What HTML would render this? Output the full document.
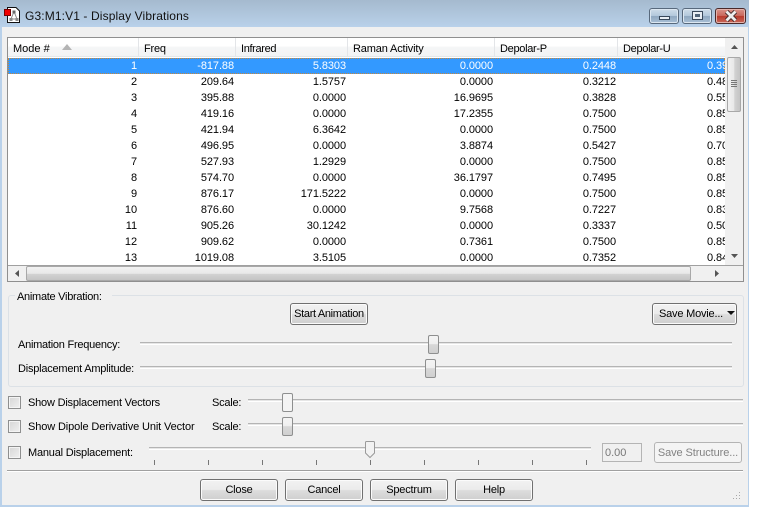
<!DOCTYPE html>
<html><head><meta charset="utf-8"><style>
html,body{margin:0;padding:0;background:#fff}
body{width:763px;height:507px;overflow:hidden;position:relative;font-family:"Liberation Sans",sans-serif;font-size:11px;color:#000}
div{position:absolute;box-sizing:border-box}
.t{white-space:nowrap;line-height:16px;height:16px;letter-spacing:-.22px}
.btn{border:1px solid #707070;border-radius:3px;background:linear-gradient(#f2f2f2 0,#ebebeb 48%,#dddddd 52%,#cfcfcf 100%);box-shadow:inset 0 0 0 1px #fbfbfb;text-align:center;line-height:21px;height:22px;letter-spacing:-.2px}
.tr{height:3px;background:#e6e6e6;border-top:1px solid #b4b4b4;border-bottom:1px solid #fff}
.th{width:11px;height:19px;border:1px solid #8e8f8f;border-radius:2px;background:linear-gradient(#f4f4f4 0,#f0f0f0 45%,#d8d8d8 50%,#d0d0d0 100%)}
.cb{width:13px;height:13px;border:1px solid #8e8f8f;background:linear-gradient(135deg,#d6d6d6,#f0f0f0);box-shadow:inset 0 0 0 1px #f4f4f4}
.hs{top:38px;height:19px;width:1px;background:#e3e5e8}
.row{left:8px;width:717px;height:16px}
.c{top:0;text-align:right;line-height:16px;height:16px;white-space:nowrap;letter-spacing:-.08px}
.c1{left:0;width:129px}.c2{left:0;width:226px}.c3{left:0;width:338px}.c4{left:0;width:485px}.c5{left:0;width:608px}
.c6{left:0;width:717px;overflow:hidden;text-align:left;padding-left:699px}
.tick{width:1px;height:5px;background:#777;top:460px}
</style></head><body>
<div style="left:0;top:0;width:749px;height:507px;background:#b9d1ea"></div>
<div style="left:0;top:0;width:749px;height:27px;background:linear-gradient(#a5bace,#b9d1ea)"></div>
<div style="left:2px;top:27px;width:746px;height:478px;background:#f0f0f0"></div>

<svg style="position:absolute;left:4px;top:7px" width="18" height="17" viewBox="0 0 18 17">
<path d="M3.500 .5H12L15.500 4V15.500H3.500Z" fill="#fff" stroke="#111"/>
<path d="M10 4.500L7 12M10 4.500L13 12M7 12H13" stroke="#888" fill="none"/>
<rect x="8.500" y="3.500" width="3" height="3" fill="#666"/><rect x="5.500" y="11" width="3" height="3" fill="#888"/><rect x="11.500" y="11" width="3" height="3" fill="#888"/>
<rect x=".5" y="2.500" width="6" height="6" fill="#f00000" stroke="#700"/>
</svg>
<div class="t" style="left:25px;top:8px;font-size:12px;color:#111;letter-spacing:.12px">G3:M1:V1 - Display Vibrations</div>

<div style="left:649px;top:8px;width:30px;height:16px;border:1px solid #58697c;border-radius:3px;background:linear-gradient(#cfdce9,#b3c8dc 48%,#8fa8c0 52%,#a9c0d6);box-shadow:inset 0 0 0 1px #dce7f1"><div style="left:9px;top:7px;width:11px;height:4px;border:1px solid #38485a;background:#e8eef4"></div></div>
<div style="left:682px;top:8px;width:30px;height:16px;border:1px solid #58697c;border-radius:3px;background:linear-gradient(#cfdce9,#b3c8dc 48%,#8fa8c0 52%,#a9c0d6);box-shadow:inset 0 0 0 1px #dce7f1"><div style="left:9px;top:2px;width:11px;height:9px;border:1px solid #38485a;background:#e8eef4"><div style="left:2px;top:2px;width:5px;height:3px;background:#51657a"></div></div></div>
<div style="left:715px;top:8px;width:31px;height:16px;border:1px solid #4a2a2a;border-radius:3px;background:linear-gradient(#d9938a,#c9685c 48%,#b83a2c 52%,#c9685a);box-shadow:inset 0 0 0 1px #e4b3ab">
<svg style="position:absolute;left:8px;top:1px" width="14" height="12" viewBox="0 0 14 12"><path d="M2.500 1.500L11.500 10.500M11.500 1.500L2.500 10.500" stroke="#3b2626" stroke-width="4.500"/><path d="M2.500 1.500L11.500 10.500M11.500 1.500L2.500 10.500" stroke="#eee" stroke-width="2.800"/></svg></div>

<!-- table -->
<div style="left:7px;top:37px;width:737px;height:245px;border:1px solid #8f8f8f;background:#fff"></div>
<div style="left:8px;top:38px;width:717px;height:19px;background:linear-gradient(#fff 0,#fff 45%,#f5f6f7 50%,#f2f3f4 100%);border-bottom:1px solid #e4e6e8"></div>
<div class="hs" style="left:138px"></div><div class="hs" style="left:235px"></div><div class="hs" style="left:347px"></div><div class="hs" style="left:494px"></div><div class="hs" style="left:617px"></div>
<div class="t" style="left:13px;top:41px;letter-spacing:0">Mode #</div>
<svg style="position:absolute;left:62px;top:44px" width="11" height="6"><path d="M0 6L5 0L10 6Z" fill="#b4b4b4"/></svg>
<div class="t" style="left:144px;top:41px">Freq</div>
<div class="t" style="left:241px;top:41px;letter-spacing:-.35px">Infrared</div>
<div class="t" style="left:353px;top:41px;letter-spacing:-.15px">Raman Activity</div>
<div class="t" style="left:500px;top:41px;letter-spacing:-.3px">Depolar-P</div>
<div class="t" style="left:623px;top:41px;letter-spacing:-.3px">Depolar-U</div>

<div class="row" style="top:58px;background:#3399ff;color:#fff;outline:1px dotted #c8873a;outline-offset:-1px"><div class="c c1">1</div><div class="c c2">-817.88</div><div class="c c3">5.8303</div><div class="c c4">0.0000</div><div class="c c5">0.2448</div><div class="c c6">0.39</div></div>
<div class="row" style="top:74px"><div class="c c1">2</div><div class="c c2">209.64</div><div class="c c3">1.5757</div><div class="c c4">0.0000</div><div class="c c5">0.3212</div><div class="c c6">0.48</div></div>
<div class="row" style="top:90px"><div class="c c1">3</div><div class="c c2">395.88</div><div class="c c3">0.0000</div><div class="c c4">16.9695</div><div class="c c5">0.3828</div><div class="c c6">0.55</div></div>
<div class="row" style="top:106px"><div class="c c1">4</div><div class="c c2">419.16</div><div class="c c3">0.0000</div><div class="c c4">17.2355</div><div class="c c5">0.7500</div><div class="c c6">0.85</div></div>
<div class="row" style="top:122px"><div class="c c1">5</div><div class="c c2">421.94</div><div class="c c3">6.3642</div><div class="c c4">0.0000</div><div class="c c5">0.7500</div><div class="c c6">0.85</div></div>
<div class="row" style="top:138px"><div class="c c1">6</div><div class="c c2">496.95</div><div class="c c3">0.0000</div><div class="c c4">3.8874</div><div class="c c5">0.5427</div><div class="c c6">0.70</div></div>
<div class="row" style="top:154px"><div class="c c1">7</div><div class="c c2">527.93</div><div class="c c3">1.2929</div><div class="c c4">0.0000</div><div class="c c5">0.7500</div><div class="c c6">0.85</div></div>
<div class="row" style="top:170px"><div class="c c1">8</div><div class="c c2">574.70</div><div class="c c3">0.0000</div><div class="c c4">36.1797</div><div class="c c5">0.7495</div><div class="c c6">0.85</div></div>
<div class="row" style="top:186px"><div class="c c1">9</div><div class="c c2">876.17</div><div class="c c3">171.5222</div><div class="c c4">0.0000</div><div class="c c5">0.7500</div><div class="c c6">0.85</div></div>
<div class="row" style="top:202px"><div class="c c1">10</div><div class="c c2">876.60</div><div class="c c3">0.0000</div><div class="c c4">9.7568</div><div class="c c5">0.7227</div><div class="c c6">0.83</div></div>
<div class="row" style="top:218px"><div class="c c1">11</div><div class="c c2">905.26</div><div class="c c3">30.1242</div><div class="c c4">0.0000</div><div class="c c5">0.3337</div><div class="c c6">0.50</div></div>
<div class="row" style="top:234px"><div class="c c1">12</div><div class="c c2">909.62</div><div class="c c3">0.0000</div><div class="c c4">0.7361</div><div class="c c5">0.7500</div><div class="c c6">0.85</div></div>
<div class="row" style="top:250px"><div class="c c1">13</div><div class="c c2">1019.08</div><div class="c c3">3.5105</div><div class="c c4">0.0000</div><div class="c c5">0.7352</div><div class="c c6">0.84</div></div>

<!-- vertical scrollbar -->
<div style="left:725px;top:38px;width:18px;height:227px;background:#f0f0f0"></div>
<svg style="position:absolute;left:731px;top:45px" width="7" height="4"><path d="M0 4L3.500 0L7 4Z" fill="#555"/></svg>
<svg style="position:absolute;left:731px;top:254px" width="7" height="4"><path d="M0 0L3.500 4L7 0Z" fill="#555"/></svg>
<div style="left:727px;top:57px;width:14px;height:55px;border:1px solid #a8a8a8;border-radius:2px;background:linear-gradient(90deg,#f2f2f2,#e8e8e8 50%,#d2d2d2 55%,#c4c4c4)"></div>
<div style="left:731px;top:80px;width:6px;height:1px;background:#777"></div><div style="left:731px;top:82px;width:6px;height:1px;background:#777"></div><div style="left:731px;top:84px;width:6px;height:1px;background:#777"></div><div style="left:731px;top:86px;width:6px;height:1px;background:#777"></div>
<!-- horizontal scrollbar -->
<div style="left:8px;top:265px;width:735px;height:16px;background:#f0f0f0;border-top:1px solid #a0a0a0"></div>
<svg style="position:absolute;left:15px;top:270px" width="4" height="7"><path d="M4 0L0 3.500L4 7Z" fill="#555"/></svg>
<svg style="position:absolute;left:715px;top:270px" width="4" height="7"><path d="M0 0L4 3.500L0 7Z" fill="#555"/></svg>
<div style="left:26px;top:266px;width:665px;height:15px;border:1px solid #a8a8a8;border-radius:2px;background:linear-gradient(#f2f2f2,#e8e8e8 50%,#d2d2d2 55%,#c4c4c4)"></div>

<!-- group box -->
<div style="left:8px;top:295px;width:736px;height:92px;border:1px solid #dce1e6;border-radius:3px"></div>
<div class="t" style="left:15px;top:289px;padding:0 10px 0 2px;background:#f0f0f0;letter-spacing:-.28px">Animate Vibration:</div>
<div class="btn" style="left:290px;top:303px;width:78px;letter-spacing:-.33px">Start Animation</div>
<div class="btn" style="left:652px;top:303px;width:85px;text-align:left;padding-left:6px">Save Movie...</div>
<svg style="position:absolute;left:727px;top:311px" width="9" height="6"><path d="M0 0H8L4 4Z" fill="#111"/></svg>

<div class="t" style="left:18px;top:337px;letter-spacing:-.25px">Animation Frequency:</div>
<div class="tr" style="left:140px;top:342px;width:592px"></div>
<div class="th" style="left:428px;top:335px"></div>
<div class="t" style="left:18px;top:361px">Displacement Amplitude:</div>
<div class="tr" style="left:140px;top:366px;width:592px"></div>
<div class="th" style="left:425px;top:359px"></div>

<div class="cb" style="left:8px;top:396px"></div>
<div class="t" style="left:28px;top:395px;letter-spacing:-.2px">Show Displacement Vectors</div>
<div class="t" style="left:212px;top:395px">Scale:</div>
<div class="tr" style="left:248px;top:399px;width:495px"></div>
<div class="th" style="left:282px;top:393px;background:#f4f4f4"></div>

<div class="cb" style="left:8px;top:420px"></div>
<div class="t" style="left:28px;top:419px;letter-spacing:-.12px">Show Dipole Derivative Unit Vector</div>
<div class="t" style="left:212px;top:419px">Scale:</div>
<div class="tr" style="left:248px;top:423px;width:495px"></div>
<div class="th" style="left:282px;top:417px"></div>

<div class="cb" style="left:8px;top:446px"></div>
<div class="t" style="left:28px;top:445px;letter-spacing:-.2px">Manual Displacement:</div>
<div class="tr" style="left:149px;top:447px;width:442px"></div>
<svg style="position:absolute;left:365px;top:441px" width="11" height="18"><path d="M.5 1.500Q.5 .5 1.500 .5H8.500Q9.500 .5 9.500 1.500V12L5 16.500L.5 12Z" fill="#f2f2f2" stroke="#9a9a9a"/></svg>
<div class="tick" style="left:154px"></div><div class="tick" style="left:208px"></div><div class="tick" style="left:262px"></div><div class="tick" style="left:316px"></div><div class="tick" style="left:370px"></div><div class="tick" style="left:424px"></div><div class="tick" style="left:478px"></div><div class="tick" style="left:532px"></div><div class="tick" style="left:586px"></div>

<div style="left:602px;top:443px;width:40px;height:19px;border:1px solid #b4b4b4;color:#777;line-height:18px;padding-left:2px">0.00</div>
<div style="left:654px;top:442px;width:88px;height:21px;border:1px solid #b4b4b4;border-radius:3px;background:#f4f4f4;color:#838383;line-height:20px;text-align:center;letter-spacing:-.1px">Save Structure...</div>

<div style="left:7px;top:470px;width:736px;height:2px;border-top:1px solid #a0a0a0;border-bottom:1px solid #fff"></div>
<div class="btn" style="left:200px;top:479px;width:78px">Close</div>
<div class="btn" style="left:285px;top:479px;width:78px">Cancel</div>
<div class="btn" style="left:370px;top:479px;width:78px">Spectrum</div>
<div class="btn" style="left:455px;top:479px;width:78px">Help</div>
<svg style="position:absolute;left:732px;top:491px" width="10" height="10" fill="#a8a8a8"><rect x="7" y="1" width="1" height="1"/><rect x="4" y="4" width="1" height="1"/><rect x="7" y="4" width="1" height="1"/><rect x="1" y="7" width="1" height="1"/><rect x="4" y="7" width="1" height="1"/><rect x="7" y="7" width="1" height="1"/></svg>
</body></html>
